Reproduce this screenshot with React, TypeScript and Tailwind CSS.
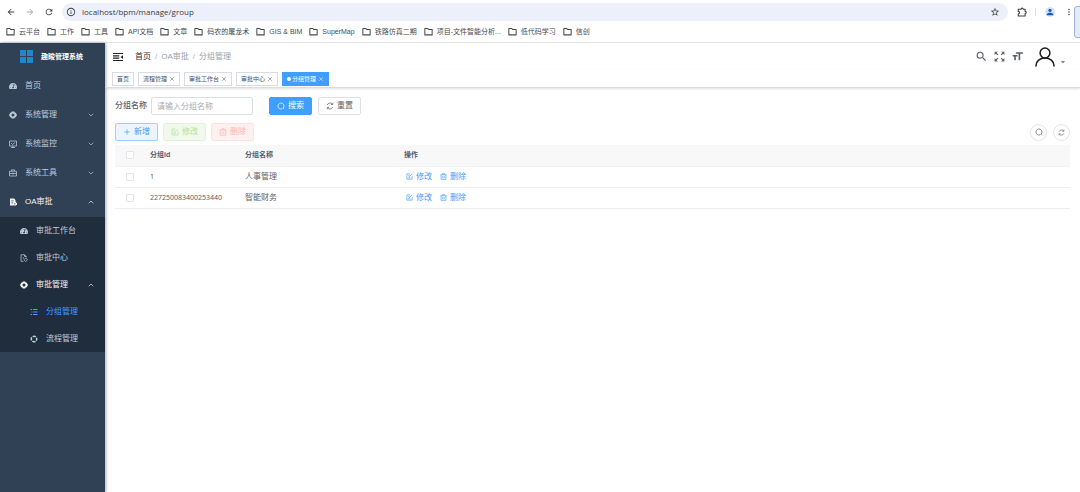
import React, { useState } from "react";
import {
  MdArrowBack,
  MdArrowForward,
  MdRefresh,
  MdInfoOutline,
  MdStarBorder,
  MdPerson,
  MdMoreVert,
  MdSearch,
  MdZoomOutMap,
  MdFormatSize,
  MdArrowDropDown,
} from "react-icons/md";
import { FaTachometerAlt } from "react-icons/fa";
import { ChevronDown, ChevronUp, Plus, X } from "lucide-react";

type IconProps = { className?: string };

const stroke = {
  viewBox: "0 0 16 16",
  fill: "none",
  stroke: "currentColor",
  strokeWidth: 1.5,
  "aria-hidden": true,
} as const;

const FolderIcon = ({ className }: IconProps) => (
  <svg {...stroke} strokeWidth={1.800} className={className}>
    <path d="M1.500 2.500h5l2 2h6v9.500h-13z" strokeLinejoin="round" />
  </svg>
);
const PuzzleIcon = ({ className }: IconProps) => (
  <svg {...stroke} strokeWidth={1.700} className={className}>
    <path d="M2 3.500h4.500a1.700 1.700 0 0 1 3.400 0H13V7a1.700 1.700 0 0 1 0 3.400V14.500H2V11a2 2 0 0 0 0-4z" strokeLinejoin="round" />
  </svg>
);
const GearIcon = ({ className }: IconProps) => (
  <svg viewBox="0 0 16 16" className={className} aria-hidden="true">
    <path
      fill="currentColor"
      fillRule="evenodd"
      d="M5.500 1h5l1 2 2 .5L16 8l-2.500 4.500-2 .5-1 2h-5l-1-2-2-.5L0 8l2.500-4.500 2-.5zM8 5a3 3 0 1 0 0 6 3 3 0 0 0 0-6z"
    />
  </svg>
);
const MonitorIcon = ({ className }: IconProps) => (
  <svg {...stroke} className={className}>
    <path d="M1 2h14v10H1zM4 15h8M4 6l3 3 5-4M8 12v3" />
  </svg>
);
const ToolboxIcon = ({ className }: IconProps) => (
  <svg {...stroke} className={className}>
    <path d="M1 4.500h14v9.500H1zM5 4V1.800h6V4M1 9h14M8 7v4" />
  </svg>
);
const DocIcon = ({ className }: IconProps) => (
  <svg viewBox="0 0 16 16" className={className} aria-hidden="true">
    <path
      fill="currentColor"
      fillRule="evenodd"
      d="M2 1h8l3 3v4h1.500v2H16v4h-2v1H2zM4.500 5v1.300H9V5zM4.500 9v1.300H8V9zM10 11v1.300h3V11z"
    />
  </svg>
);
const DocOutlineIcon = ({ className }: IconProps) => (
  <svg {...stroke} className={className}>
    <path d="M7 14.500H2v-13h7l3.500 3.500v2M9 1.500V5h3.500M5 8h3" />
    <path d="M8 11.500l3.500-3.500 3.500 3.500-3.500 3.500z" />
  </svg>
);
const ListIcon = ({ className }: IconProps) => (
  <svg {...stroke} strokeWidth={2} className={className}>
    <path d="M1 3h3M6 3h9M3 8h2M7 8h8M1 13h3M6 13h9" />
  </svg>
);
const FlowIcon = ({ className }: IconProps) => (
  <svg {...stroke} strokeWidth={3} className={className}>
    <circle cx="8" cy="8" r="5.500" strokeDasharray="6.600 2" strokeDashoffset="3.300" />
  </svg>
);
const FoldIcon = ({ className }: IconProps) => (
  <svg {...stroke} strokeWidth={1.700} className={className}>
    <path d="M0 2.500h16M0 6.200h10M0 9.800h10M0 13.500h16" />
    <path d="M16 5v6l-4-3z" fill="currentColor" stroke="none" />
  </svg>
);
const EditIcon = ({ className }: IconProps) => (
  <svg {...stroke} className={className}>
    <path d="M9 2H2v12h12V7M6.500 9.500L14 2M5 6h3M5 11h5" />
  </svg>
);
const TrashIcon = ({ className }: IconProps) => (
  <svg {...stroke} className={className}>
    <path d="M1 4h14M5.500 4V1.500h5V4M2.500 4v10.500h11V4M6.300 7v5M9.700 7v5" />
  </svg>
);
const SearchIcon = ({ className }: IconProps) => (
  <svg {...stroke} className={className}>
    <path d="M12 12.500a6 6 0 1 0-2 1.200M11.500 12l2.500 2.500" />
  </svg>
);
const ResetIcon = ({ className }: IconProps) => (
  <svg {...stroke} className={className}>
    <path d="M2.500 6A6 6 0 0 1 13 4.500M13.500 1.500v3.500H10M13.500 10A6 6 0 0 1 3 11.500M2.500 14.500V11H6" />
  </svg>
);
const UserIcon = ({ className }: IconProps) => (
  <svg viewBox="0 0 20 20" fill="none" stroke="currentColor" strokeWidth="1.500" className={className} aria-hidden="true">
    <circle cx="10" cy="6" r="4.900" />
    <path d="M1 19.500v-1a9 7.600 0 0 1 18 0v1" />
  </svg>
);
const LogoIcon = ({ className }: IconProps) => (
  <svg viewBox="0 0 13 13" fill="#2187cc" className={className} aria-hidden="true">
    <path d="M0 0h6v6H0zM7 0h6v6H7zM0 7h6v6H0zM7 7h6v6H7z" />
  </svg>
);

const bookmarks = [
  "云平台", "工作", "工具", "API文档", "文章", "码农的屠龙术", "GIS & BIM",
  "SuperMap", "铁路仿真二期", "项目-文件智能分析...", "低代码学习", "信创",
];

function BrowserBar() {
  return (
    <header className="border-b border-[#e4e5e8] bg-white">
      <div className="flex items-center pt-[3px] pr-[6px] pl-[6px] text-[#3c4043]">
        <nav className="flex items-center gap-[9px]" aria-label="浏览器">
          <button type="button" aria-label="后退"><MdArrowBack className="size-[10px]" /></button>
          <button type="button" aria-label="前进" className="text-[#a8abb0]"><MdArrowForward className="size-[10px]" /></button>
          <button type="button" aria-label="刷新"><MdRefresh className="size-[10px]" /></button>
        </nav>
        <div className="ml-2 flex h-[18px] flex-1 items-center rounded-full bg-[#edeffa] pr-2 pl-1">
          <MdInfoOutline className="size-[10px]" />
          <input
            aria-label="地址"
            defaultValue="localhost/bpm/manage/group"
            className="ml-[6px] min-w-0 flex-1 bg-transparent font-['Open_Sans',sans-serif] text-[8px] leading-3 outline-none"
          />
          <button type="button" aria-label="收藏"><MdStarBorder className="size-[10px]" /></button>
        </div>
        <button type="button" aria-label="扩展" className="ml-[9px]"><PuzzleIcon className="size-[10px]" /></button>
        <span className="ml-2 h-2 w-px bg-[#dcdfe6]" />
        <button type="button" aria-label="账户" className="ml-[9px] rounded-full bg-[#d3e3fd] text-[#1b57b0]">
          <MdPerson className="size-[10px]" />
        </button>
        <button type="button" aria-label="更多" className="ml-[9px]"><MdMoreVert className="size-[10px]" /></button>
      </div>
      <div className="flex h-[21px] items-center gap-[7px] overflow-hidden pl-[6px] text-[#474a4e]">
        {bookmarks.map((b) => (
          <a key={b} href="#" className="flex shrink-0 items-center gap-1">
            <FolderIcon className="size-[9px]" />
            <span className="text-[7px] leading-3">{b}</span>
          </a>
        ))}
      </div>
    </header>
  );
}

type MenuRow = { label: string; icon: (p: IconProps) => React.ReactNode; arrow?: "up" | "down"; tone?: string; pad?: string };

const mainMenu: MenuRow[] = [
  { label: "首页", icon: FaTachometerAlt },
  { label: "系统管理", icon: GearIcon, arrow: "down" },
  { label: "系统监控", icon: MonitorIcon, arrow: "down" },
  { label: "系统工具", icon: ToolboxIcon, arrow: "down" },
  { label: "OA审批", icon: DocIcon, arrow: "up", tone: "text-[#f4f4f5]" },
];
const subMenu: MenuRow[] = [
  { label: "审批工作台", icon: FaTachometerAlt, pad: "pl-5" },
  { label: "审批中心", icon: DocOutlineIcon, pad: "pl-5" },
  { label: "审批管理", icon: GearIcon, arrow: "up", tone: "text-[#f4f4f5]", pad: "pl-5" },
  { label: "分组管理", icon: ListIcon, tone: "text-[#409eff]", pad: "pl-[30px]" },
  { label: "流程管理", icon: FlowIcon, pad: "pl-[30px]" },
];

function MenuLink({ row, height }: { row: MenuRow; height: string }) {
  const Icon = row.icon;
  return (
    <li>
      <a href="#" className={`flex items-center pr-[10px] ${height} ${row.pad ?? "pl-[9px]"} ${row.tone ?? "text-[#bfcbd9]"}`}>
        <Icon className="size-2 shrink-0" />
        <span className="ml-2 flex-1 text-[8px] leading-3">{row.label}</span>
        {row.arrow === "down" && <ChevronDown className="size-2" />}
        {row.arrow === "up" && <ChevronUp className="size-2" />}
      </a>
    </li>
  );
}

function Sidebar() {
  return (
    <aside className="w-[105px] shrink-0 bg-[#304156] shadow-[1px_0_3px_rgba(0,21,41,0.35)]">
      <a href="#" className="flex h-[27px] items-center gap-2 pl-5 text-white">
        <LogoIcon className="size-[13px]" />
        <h1 className="text-[7px] leading-3 font-bold">趣睃管理系统</h1>
      </a>
      <ul className="pt-px pb-px">
        {mainMenu.map((r) => <MenuLink key={r.label} row={r} height="h-[29px]" />)}
      </ul>
      <ul className="bg-[#1f2d3d]">
        {subMenu.map((r) => <MenuLink key={r.label} row={r} height="h-[27px]" />)}
      </ul>
    </aside>
  );
}

function Navbar() {
  return (
    <div className="flex h-[27px] items-center pr-3 pl-2">
      <button type="button" aria-label="折叠菜单" className="text-[#222]"><FoldIcon className="size-[10px]" /></button>
      <nav aria-label="面包屑" className="ml-3 flex items-center gap-1 text-[8px] leading-3">
        <a href="#" className="text-[#303133]">首页</a>
        <span className="text-[#b0b4bb]">/</span>
        <span className="text-[#9a9fa8]">OA审批</span>
        <span className="text-[#b0b4bb]">/</span>
        <span className="text-[#9a9fa8]">分组管理</span>
      </nav>
      <div className="ml-auto flex items-center text-[#5a5e66]">
        <button type="button" aria-label="搜索"><MdSearch className="size-[13px]" /></button>
        <button type="button" aria-label="全屏" className="ml-[5px]"><MdZoomOutMap className="size-[13px]" /></button>
        <button type="button" aria-label="字号" className="ml-[5px]"><MdFormatSize className="size-[13px]" /></button>
        <button type="button" aria-label="用户" className="ml-[11px] flex items-end text-[#1c1c1c]">
          <UserIcon className="size-5" />
          <MdArrowDropDown className="ml-[3px] size-[10px] text-[#666]" />
        </button>
      </div>
    </div>
  );
}

const tabs = ["首页", "流程管理", "审批工作台", "审批中心", "分组管理"];

function TagsView() {
  return (
    <div className="flex h-[18px] items-center gap-1 border-b border-[#d8dce5] pl-[7px] shadow-[0_1px_2px_rgba(0,0,0,0.12)]">
      {tabs.map((t, i) => {
        const active = i === tabs.length - 1;
        return (
          <div
            key={t}
            className={`flex h-[14px] items-center border px-1 text-[6px] leading-3 ${
              active ? "border-[#409eff] bg-[#409eff] text-white" : "border-[#d8dce5] bg-white text-[#495060]"
            }`}
          >
            {active && <span className="mr-px size-1 rounded-full bg-white" />}
            <a href="#">{t}</a>
            {i > 0 && (
              <button type="button" aria-label={`关闭${t}`} className="ml-[2px]"><X className="size-[6px]" /></button>
            )}
          </div>
        );
      })}
    </div>
  );
}

const btn = "flex h-[18px] items-center justify-center gap-[3px] rounded-[2px] border px-[7px] text-[8px] leading-3";

function Filters() {
  return (
    <form className="flex items-center" onSubmit={(e) => e.preventDefault()}>
      <label htmlFor="group-name" className="text-[8px] leading-3 font-medium text-[#606266]">分组名称</label>
      <input
        id="group-name"
        placeholder="请输入分组名称"
        className="ml-1 h-[18px] w-[102px] rounded-[2px] border border-[#dcdfe6] px-[5px] text-[8px] leading-3 outline-none placeholder:text-[#a8abb2]"
      />
      <button type="submit" className={`${btn} ml-4 border-[#409eff] bg-[#409eff] text-white`}>
        <SearchIcon className="size-2" />搜索
      </button>
      <button type="reset" className={`${btn} ml-[6px] border-[#dcdfe6] bg-white text-[#606266]`}>
        <ResetIcon className="size-2" />重置
      </button>
    </form>
  );
}

function Toolbar() {
  const round = "flex size-[17px] items-center justify-center rounded-full border border-[#e1e4ea] text-[#606266]";
  return (
    <div className="mt-2 flex items-center gap-[5px]">
      <button type="button" className={`${btn} border-[#a0cfff] bg-[#ecf5ff] text-[#409eff]`}>
        <Plus className="size-2" />新增
      </button>
      <button type="button" disabled className={`${btn} border-[#e1f3d8] bg-[#f0f9eb] text-[#b3e19d]`}>
        <EditIcon className="size-2" />修改
      </button>
      <button type="button" disabled className={`${btn} border-[#fde2e2] bg-[#fef0f0] text-[#fab6b6]`}>
        <TrashIcon className="size-2" />删除
      </button>
      <div className="ml-auto flex gap-[6px]">
        <button type="button" aria-label="隐藏搜索" className={round}><SearchIcon className="size-2" /></button>
        <button type="button" aria-label="刷新列表" className={round}><ResetIcon className="size-[7px]" /></button>
      </div>
    </div>
  );
}

const groups = [
  { id: "1", name: "人事管理" },
  { id: "227250083400253440", name: "智能财务" },
];

function Check({ label, checked, onChange }: { label: string; checked: boolean; onChange: () => void }) {
  return (
    <input
      type="checkbox"
      aria-label={label}
      checked={checked}
      onChange={onChange}
      className="mx-auto block size-2 appearance-none rounded-[1px] border border-[#e1e4ea] bg-white checked:border-[#409eff] checked:bg-[#409eff]"
    />
  );
}

function GroupTable() {
  const [picked, setPicked] = useState<string[]>([]);
  const all = picked.length === groups.length;
  const toggle = (id: string) =>
    setPicked((p) => (p.includes(id) ? p.filter((x) => x !== id) : [...p, id]));
  return (
    <table className="mt-1 w-full table-fixed border-collapse text-left text-[8px] leading-3 text-[#606266]">
      <colgroup>
        <col className="w-[30px]" />
        <col className="w-[95px]" />
        <col className="w-[159px]" />
        <col />
      </colgroup>
      <thead>
        <tr className="h-[21px] border-b border-[#f0f2f6] bg-[#f8f8f9] text-[7px] text-[#515a6e]">
          <th><Check label="全选" checked={all} onChange={() => setPicked(all ? [] : groups.map((g) => g.id))} /></th>
          <th className="px-[5px] font-bold">分组id</th>
          <th className="px-[5px] font-bold">分组名称</th>
          <th className="px-[5px] font-bold">操作</th>
        </tr>
      </thead>
      <tbody>
        {groups.map((g) => (
          <tr key={g.id} className="h-[21px] border-b border-[#ebeef5]">
            <td><Check label={`选择${g.name}`} checked={picked.includes(g.id)} onChange={() => toggle(g.id)} /></td>
            <td className="px-[5px] font-['Noto_Sans',sans-serif] text-[7px]">{g.id}</td>
            <td className="px-[5px]">{g.name}</td>
            <td className="px-[7px]">
              <div className="flex gap-2 text-[#409eff]">
                <button type="button" className="flex items-center gap-[3px]"><EditIcon className="size-[7px]" />修改</button>
                <button type="button" className="flex items-center gap-[3px]"><TrashIcon className="size-[7px]" />删除</button>
              </div>
            </td>
          </tr>
        ))}
      </tbody>
    </table>
  );
}

export default function App() {
  return (
    <div className="relative flex min-h-screen flex-col overflow-hidden bg-white font-['Liberation_Sans','Noto_Sans_CJK_SC',sans-serif]">
      <BrowserBar />
      <div className="flex flex-1">
        <Sidebar />
        <main className="min-w-0 flex-1">
          <Navbar />
          <TagsView />
          <section className="px-[10px] pt-[9px]">
            <Filters />
            <Toolbar />
            <GroupTable />
          </section>
        </main>
      </div>
      <div className="absolute top-[6px] -right-1 h-8 w-[10px] rounded-[3px] border border-[#9fb4d6] bg-[#e1ebfa]" />
    </div>
  );
}
